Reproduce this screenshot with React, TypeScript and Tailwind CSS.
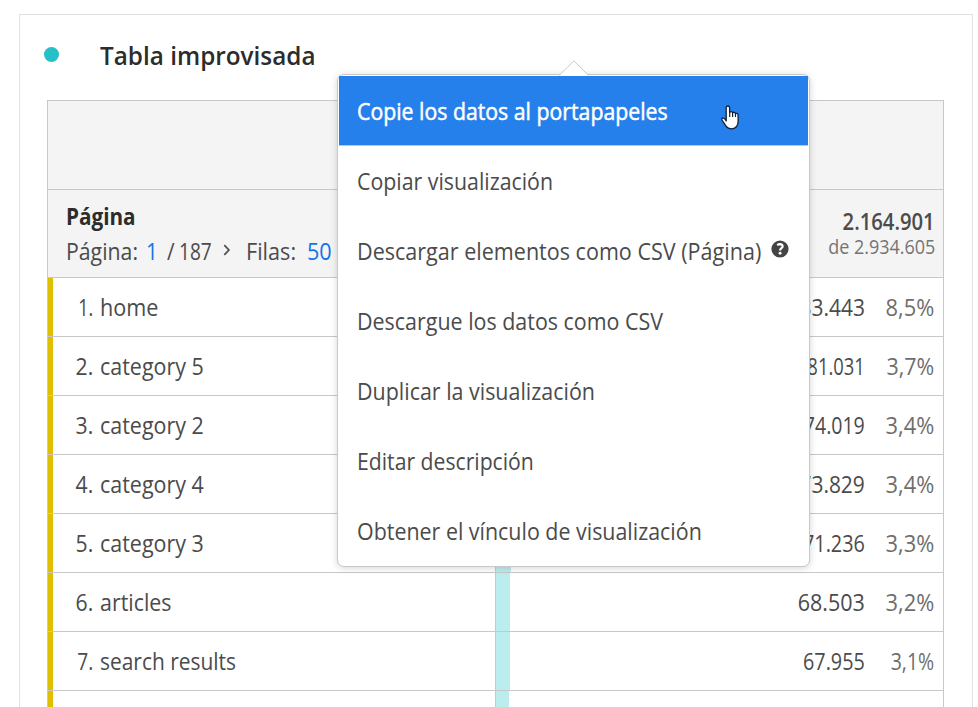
import React from 'react';
import clsx from 'clsx';

type TextProps = { children: React.ReactNode; className?: string };

// Slightly condensed text anchored at its left edge.
function Txt({ children, className }: TextProps) {
  return (
    <span className={clsx('inline-block origin-left whitespace-nowrap', className)}>{children}</span>
  );
}

// Slightly condensed text anchored at its right edge.
function Num({ children, className }: TextProps) {
  return (
    <span className={clsx('inline-block origin-right whitespace-nowrap', className)}>{children}</span>
  );
}

type Row = {
  n: number;
  name: string;
  value: string;
  pct: string;
  bar: number;
  nScale: string;
  nameScale: string;
  scale: string;
  pctScale: string;
};

const rows: Row[] = [
  { n: 1, name: 'home', value: '183.443', pct: '8,5%', bar: 38, nScale: 'scale-x-[0.78]', nameScale: 'scale-x-[0.94]', scale: 'scale-x-[0.91]', pctScale: 'scale-x-[0.95]' },
  { n: 2, name: 'category 5', value: '81.031', pct: '3,7%', bar: 17, nScale: 'scale-x-[0.92]', nameScale: 'scale-x-[0.933]', scale: 'scale-x-[0.8]', pctScale: 'scale-x-[0.93]' },
  { n: 3, name: 'category 2', value: '74.019', pct: '3,4%', bar: 15, nScale: 'scale-x-[0.92]', nameScale: 'scale-x-[0.933]', scale: 'scale-x-[0.85]', pctScale: 'scale-x-[0.95]' },
  { n: 4, name: 'category 4', value: '73.829', pct: '3,4%', bar: 15, nScale: 'scale-x-[0.92]', nameScale: 'scale-x-[0.933]', scale: 'scale-x-[0.91]', pctScale: 'scale-x-[0.95]' },
  { n: 5, name: 'category 3', value: '71.236', pct: '3,3%', bar: 15, nScale: 'scale-x-[0.92]', nameScale: 'scale-x-[0.933]', scale: 'scale-x-[0.86]', pctScale: 'scale-x-[0.95]' },
  { n: 6, name: 'articles', value: '68.503', pct: '3,2%', bar: 14, nScale: 'scale-x-[0.92]', nameScale: 'scale-x-[0.93]', scale: 'scale-x-[0.935]', pctScale: 'scale-x-[0.95]' },
  { n: 7, name: 'search results', value: '67.955', pct: '3,1%', bar: 14, nScale: 'scale-x-[0.83]', nameScale: 'scale-x-[0.91]', scale: 'scale-x-[0.86]', pctScale: 'scale-x-[0.85]' },
];

const menu = [
  { label: 'Copiar visualización', scale: 'scale-x-[0.927]' },
  { label: 'Descargar elementos como CSV (Página)', scale: 'scale-x-[0.937]', help: true },
  { label: 'Descargue los datos como CSV', scale: 'scale-x-[0.932]' },
  { label: 'Duplicar la visualización', scale: 'scale-x-[0.932]' },
  { label: 'Editar descripción', scale: 'scale-x-[0.921]' },
  { label: 'Obtener el vínculo de visualización', scale: 'scale-x-[0.931]' },
];

function HandCursor() {
  return (
    <svg className="h-[25px] w-[18px]" viewBox="0 0 18 25">
      <path
        d="M5.2 16V3Q5.2 1 6.9 1Q8.6 1 8.6 3V7.2Q10.6 5.8 11.6 7.6Q13.6 6.6 14.5 8.4Q17.1 7.8 17.1 10.4V16.5Q17.1 19 15.8 21Q14.4 23.8 10.5 23.8Q6.9 23.8 5 21.2L1.2 15.4Q.3 13.8 1.5 13.2Q3 12.6 4.2 14.4Z"
        fill="#fff"
        stroke="#12203c"
        strokeWidth="1.3"
        strokeLinejoin="round"
      />
      <path d="M8.7 7V12M11.6 8V12M14.5 8.8V12" stroke="#12203c" strokeWidth="1.2" fill="none" />
    </svg>
  );
}

function HelpIcon() {
  return (
    <svg className="h-[18px] w-[18px]" viewBox="0 0 18 18">
      <circle cx="9" cy="9" r="8.6" fill="#444" />
      <path
        d="M6.2 5.1Q7.5 4.2 9 4.2Q11.6 4.3 11.6 6.4Q11.6 7.4 10.4 8.2Q9.1 9.1 9.1 10.6"
        fill="none"
        stroke="#fff"
        strokeWidth="2.2"
      />
      <circle cx="9.1" cy="13.3" r="1.45" fill="#fff" />
    </svg>
  );
}

function ContextMenu() {
  return (
    <div className="absolute left-[337px] top-[74px] h-[493px] w-[473px] rounded-[7px] border border-[#c9c9c9] bg-white shadow-[0_1px_7px_rgba(0,0,0,0.17)]">
      <svg className="absolute -top-[15px] left-[220px] h-[17px] w-[32px]" viewBox="0 0 32 17">
        <path d="M0 16.5L16 .8L31.5 16.5Z" fill="#fff" />
        <path d="M1 15.5L16 .8L30.5 15.5" fill="none" stroke="#c9c9c9" />
      </svg>
      <div className="relative mx-px mt-px flex h-[70px] items-center border-b border-[#a5cbf8] bg-[#2680eb] pl-[18px] pt-[2px] text-white [-webkit-text-stroke:0.5px_white]">
        <Txt className="scale-x-[0.925]">Copie los datos al portapapeles</Txt>
        <div className="absolute left-[382px] top-[29px]">
          <HandCursor />
        </div>
      </div>
      {menu.map((m) => (
        <div key={m.label} className="flex h-[70px] items-center pl-[19px]">
          <Txt className={m.scale}>{m.label}</Txt>
          {m.help && (
            <span className="-ml-[17px] -mt-[4px]">
              <HelpIcon />
            </span>
          )}
        </div>
      ))}
    </div>
  );
}

export default function App() {
  return (
    <div className="relative h-[707px] w-[978px] overflow-hidden bg-white pl-[19px] pt-[14px] font-['Open_Sans',sans-serif] text-[23px] leading-none text-[#4b4b4b]">
      <div className="h-[720px] w-[954px] border border-[#e1e1e1]">
        <div className="flex h-[85px] items-center pl-[24px]">
          <span className="-mt-[7px] size-[15px] rounded-full bg-[#26c0c7]" />
          <h1 className="-mt-[6px] ml-[41px] text-[26px] font-semibold text-[#2c2c2c]">
            <Txt className="scale-x-[0.935]">Tabla improvisada</Txt>
          </h1>
        </div>
        <div className="ml-[27px] w-[897px] border border-[#c8c8c8]">
          <div className="h-[89px] border-b border-[#c8c8c8] bg-[#f4f4f4]" />
          <div className="flex h-[88px] justify-between border-b border-[#c8c8c8] bg-[#f4f4f4]">
            <div className="pl-[17.5px] pt-[15px]">
              <div className="font-bold text-[#2c2c2c]">
                <Txt className="scale-x-[0.9]">Página</Txt>
              </div>
              <div className="mt-[12px] flex items-center">
                <span className="w-[80.5px]"><Txt className="scale-x-[0.925]">Página:</Txt></span>
                <span className="w-[21px] text-[#1473e6]"><Txt className="scale-x-[0.9]">1</Txt></span>
                <span className="w-[12px]"><Txt className="scale-x-[0.9]">/</Txt></span>
                <span className="w-[43px]"><Txt className="scale-x-[0.83]">187</Txt></span>
                <svg className="-mt-1 h-3 w-[24px]" viewBox="0 0 24 12">
                  <path d="M2.3 1.2L6.9 6L2.3 10.8" fill="none" stroke="#4b4b4b" strokeWidth="1.7" />
                </svg>
                <span className="w-[60.5px]"><Txt className="scale-x-[0.94]">Filas:</Txt></span>
                <span className="text-[#1473e6]"><Txt className="scale-x-[0.94]">50</Txt></span>
              </div>
            </div>
            <div className="flex flex-col items-end pr-[8px] pt-[20px]">
              <Num className="scale-x-[0.88] font-semibold">2.164.901</Num>
              <Num className="mt-[4px] scale-x-[0.898] text-[20px] text-[#747474]">de 2.934.605</Num>
            </div>
          </div>
          {rows.map((r) => (
            <div key={r.n} className="flex h-[59px] border-b border-[#c8c8c8]">
              <div className="w-[5px] bg-[#e0bf00]" />
              <div className="flex w-[443px] items-center border-r border-[#c8c8c8]">
                <span className="w-[40px] text-right"><Num className={r.nScale}>{r.n}.</Num></span>
                <span className="ml-[7px]"><Txt className={r.nameScale}>{r.name}</Txt></span>
              </div>
              <div className="bg-[#bbecee]" style={{ width: r.bar }} />
              <div className="flex flex-1 items-center justify-end pr-[8.5px]">
                <Num className={r.scale}>{r.value}</Num>
                <span className="w-[69.5px] text-right text-[#6e6e6e]">
                  <Num className={r.pctScale}>{r.pct}</Num>
                </span>
              </div>
            </div>
          ))}
          <div className="flex h-[59px]">
            <div className="w-[5px] bg-[#e0bf00]" />
            <div className="w-[443px] border-r border-[#c8c8c8]" />
            <div className="w-[13px] bg-[#bbecee]" />
          </div>
        </div>
      </div>
      <ContextMenu />
    </div>
  );
}
